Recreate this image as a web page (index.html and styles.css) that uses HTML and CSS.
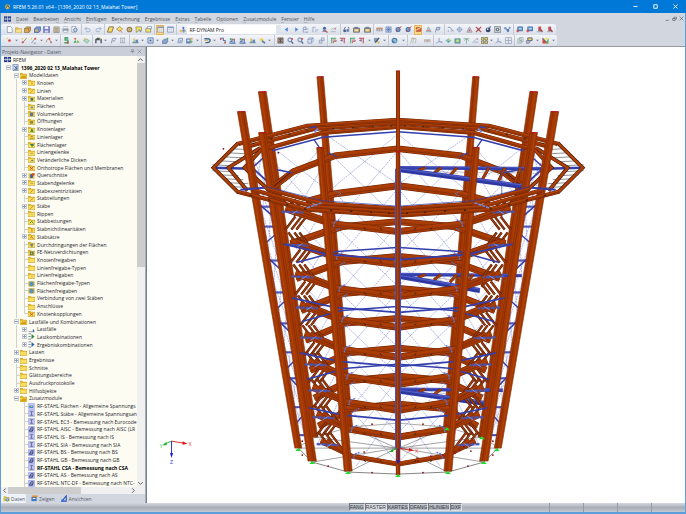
FILE: index.html
```html
<!DOCTYPE html>
<html lang="de">
<head>
<meta charset="utf-8">
<title>RFEM 5.26.01 x64 - [1396_2020 02 13_Malahat Tower]</title>
<link rel="stylesheet" href="styles.css">
</head>
<body>
<div class="window">
  <header class="titlebar">
    <svg class="app-icon" viewBox="0 0 16 16"><circle cx="8" cy="8" r="6.5" fill="#3f87a8"/><path d="M2 9l5-6 4 3 3-2-2 8-6 2z" fill="#e2bd58"/><path d="M4 12l4-7 4 6" fill="none" stroke="#30526b" stroke-width="2"/></svg>
    <h1 class="title">RFEM 5.26.01 x64 - [1396_2020 02 13_Malahat Tower]</h1>
    <button class="win-btn" aria-label="Minimieren"><svg viewBox="0 0 10 10"><path d="M1 5h8"/></svg></button>
    <button class="win-btn" aria-label="Maximieren"><svg viewBox="0 0 10 10"><path d="M1.500 1.500h7v7h-7z"/></svg></button>
    <button class="win-btn" aria-label="Schließen"><svg viewBox="0 0 10 10"><path d="M1 1l8 8M9 1l-8 8"/></svg></button>
  </header>

  <nav class="menubar">
    <svg class="menu-icon" viewBox="0 0 16 12"><path fill="#263b86" d="M0 0h16v12H0z"/><path d="M8 0v12M0 6h16M4 3v6M12 3v6" stroke="#dfe5f5" stroke-width="1.500"/></svg>
    <a href="#"><u>D</u>atei</a><a href="#">Bearbeite<u>n</u></a><a href="#"><u>A</u>nsicht</a><a href="#"><u>E</u>infügen</a><a href="#">Be<u>r</u>echnung</a><a href="#">Er<u>g</u>ebnisse</a><a href="#">E<u>x</u>tras</a><a href="#"><u>T</u>abelle</a><a href="#">O<u>p</u>tionen</a><a href="#"><u>Z</u>usatzmodule</a><a href="#"><u>F</u>enster</a><a href="#"><u>H</u>ilfe</a>
    <span class="mdi">
      <button aria-label="Fenster minimieren"><svg viewBox="0 0 8 8"><path d="M1 7h5"/></svg></button>
      <button aria-label="Fenster wiederherstellen"><svg viewBox="0 0 8 8"><path d="M1 4h4v3H1zM3 4V2h4v3H5"/></svg></button>
      <button aria-label="Fenster schließen"><svg viewBox="0 0 8 8"><path d="M1 1l6 6M7 1L1 7"/></svg></button>
    </span>
  </nav>

  <div class="toolbar toolbar-file" id="toolbar-file"></div>
  <div class="toolbar toolbar-edit" id="toolbar-edit"></div>

  <main class="workspace">
    <aside class="navigator">
      <div class="panel-head">
        <h2>Projekt-Navigator - Daten</h2>
        <button aria-label="Anheften"><svg viewBox="0 0 8 8"><path d="M2.500 1h3v3h-3zM1 4h6M4 4v3"/></svg></button>
        <button aria-label="Navigator schließen"><svg viewBox="0 0 8 8"><path d="M1 1l6 6M7 1L1 7"/></svg></button>
      </div>
      <div class="tree-wrap">
        <ul class="tree" id="tree"></ul>
        <div class="vscroll"><svg viewBox="0 0 8 8"><path d="M1.500 5.500L4 3l2.500 2.500"/></svg><div class="track"><i></i></div><svg viewBox="0 0 8 8"><path d="M1.500 2.500L4 5l2.500-2.500"/></svg></div>
      </div>
      <div class="hscroll"><svg viewBox="0 0 8 8"><path d="M5.500 1.500L3 4l2.500 2.500"/></svg><div class="track"><i></i></div><svg viewBox="0 0 8 8"><path d="M2.500 1.500L5 4 2.500 6.500"/></svg></div>
      <div class="tabs">
        <button class="tab active"><svg viewBox="0 0 16 16"><path d="M1 3h6l1 2h7v9H1z" fill="#ecc63a"/><path d="M5 6h8v5H5z" fill="#fff" stroke="#566"/><circle cx="10" cy="11" r="3" fill="#8cc8ef" stroke="#27588e"/></svg>Daten</button>
        <button class="tab"><svg viewBox="0 0 16 16"><path d="M1 4h12v10H1z" fill="#3c79c2"/><path d="M3 1h12v4H3z" fill="#e68a2e"/><path d="M4 7h6v2H4z" fill="#fff"/></svg>Zeigen</button>
        <button class="tab"><svg viewBox="0 0 16 16"><path d="M2 14L12 2v12z" fill="none" stroke="#2455bd" stroke-width="2.500"/><circle cx="4" cy="12" r="3" fill="#3c79d2"/></svg>Ansichten</button>
      </div>
    </aside>
    <section class="viewport"><svg id="model" viewBox="147 46 538 457" role="img" aria-label="3D-Modell Malahat Tower"></svg></section>
  </main>

  <footer class="statusbar">
    <div class="snaps"><button>FANG</button><button class="on">RASTER</button><button>KARTES</button><button>OFANG</button><button>HLINIEN</button><button>DXF</button></div>
    <div class="cells"><i></i><i></i><i></i><i></i></div>
  </footer>
</div>
<script src="script.js"></script>
</body>
</html>
```
FILE: styles.css
```css
* { box-sizing: border-box; }
html, body { height: 100%; margin: 0; }
body { font-family: "Open Sans", "Noto Sans", sans-serif; font-size: 5px; line-height: 8px; color: #2c2c30; overflow: hidden; }
button { font: inherit; color: inherit; background: none; border: 0; padding: 0; margin: 0; display: flex; align-items: center; justify-content: center; }
svg { display: block; }
h1, h2 { margin: 0; font: inherit; }
.window { display: flex; flex-direction: column; height: 100%; background: #d2d6df; border: solid #5b9edb; border-width: 0 1px 2px; }

.titlebar { display: flex; align-items: center; height: 13px; flex: none; margin: 0 -1px; padding: 0 1px 0 4px; background: #0078d7; color: #fff; }
.app-icon { width: 7px; height: 7px; margin-right: 2px; }
.title { flex: 1; }
.win-btn { width: 19px; height: 13px; margin-left: 1px; }
.win-btn svg { width: 5px; height: 5px; fill: none; stroke: #e4f1fb; stroke-width: 2; }

.menubar { display: flex; align-items: center; flex: none; height: 11px; gap: 5px; padding-left: 3px; color: #50545c; }
.menubar a { color: inherit; text-decoration: none; }
.menu-icon { width: 7px; height: 6px; }
.menubar u { text-decoration-thickness: 1px; text-decoration-color: #b0b3bb; }
.mdi { display: flex; gap: 2px; margin-left: auto; padding-right: 1px; }
.mdi svg, .panel-head svg { width: 5px; height: 5px; fill: none; stroke: #555963; stroke-width: 1; }

.toolbar { display: grid; flex: none; height: 11px; width: max-content; background: linear-gradient(#f3f5f9, #d9dee8); border-radius: 2px; padding-left: 3px; }
.toolbar-file { grid-template-columns: 78px 23px 50px 22px 164px 33px 71px 69px 42px; }
.toolbar-edit { grid-template-columns: 57px 32px 37px 72px 73px 53px 61px 19px 26px 81px 42px; }
.group { display: flex; align-items: center; justify-content: space-between; padding: 0 2px 0 1px; border-right: 1px solid #c3c8d3; }
.group:last-child { border: 0; }
.tool { width: 8px; height: 10px; flex: none; }
.tool svg { width: 7px; height: 7px; opacity: 0.85; }
.tool.active { background: #ffd88c; outline: 1px solid #e8b45c; outline-offset: -1px; }
.drop { width: 4px; flex: none; }
.drop svg { width: 3px; height: 3px; }
.module { appearance: none; width: 94px; height: 9px; border: 0; border-right: 5px solid #dfe3ea; border-radius: 0; background: #fff; font: inherit; padding: 0 2px; color: #222; }

.workspace { display: flex; flex: 1; min-height: 0; border-top: 1px solid #969ba6; }
.navigator { display: flex; flex-direction: column; width: 145px; flex: none; border-right: 1px solid #a9aebb; }
.panel-head { display: flex; align-items: center; gap: 2px; height: 9px; flex: none; padding: 0 3px 0 1px; background: #c9ced9; color: #545b68; }
.panel-head h2 { flex: 1; }
.panel-head svg { stroke: #80858f; }
.tree-wrap { display: flex; flex: 1; min-height: 0; background: #fdfcf3; }
.tree { flex: 1; min-width: 0; overflow: hidden; list-style: none; margin: 0; padding: 0 0 0 3px; display: grid; grid-auto-rows: minmax(0, 1fr); color: #26262a; }
.tree li { display: flex; align-items: center; white-space: nowrap; min-width: 0; }
.tree li.bold { font-weight: 700; color: #000; }
.tree svg { width: 7px; height: 7px; flex: none; margin-right: 2px; }
.guide { width: 8px; align-self: stretch; flex: none; background: linear-gradient(#d0d0cc, #d0d0cc) 4px 0 / 1px 100% no-repeat; }
.guide.blank { background: none; }
.guide.leaf { background: linear-gradient(#d0d0cc, #d0d0cc) 4px 0 / 1px 100% no-repeat, linear-gradient(#d0d0cc, #d0d0cc) 4px 50% / 4px 1px no-repeat; }
.guide.last { background: linear-gradient(#d0d0cc, #d0d0cc) 4px 0 / 1px 50% no-repeat, linear-gradient(#d0d0cc, #d0d0cc) 4px 50% / 4px 1px no-repeat; }
.toggle { width: 5px; height: 5px; border: 1px solid #c6cad3; background: #f6f8fb; margin: 0 1px 0 2px; flex: none; position: relative; }
.toggle::before { content: ""; width: 3px; height: 1px; background: #8c9aba; flex: none; }
.toggle.closed::after { content: ""; position: absolute; width: 1px; height: 3px; left: 1px; top: 0; background: #8c9aba; }

.vscroll, .hscroll { display: flex; flex: none; background: #f0f0f0; }
.vscroll { flex-direction: column; width: 8px; }
.hscroll { height: 7px; padding-right: 8px; align-items: stretch; }
.vscroll svg, .hscroll svg { width: 7px; height: 7px; fill: none; stroke: #505050; stroke-width: 1; flex: none; }
.track { flex: 1; display: flex; }
.vscroll .track { flex-direction: column; }
.track i { background: #cdcdcd; }
.vscroll .track i { height: 49%; }
.hscroll .track i { width: 60%; }

.tabs { display: flex; gap: 3px; height: 9px; flex: none; color: #555b68; }
.tab { padding: 0 1px 0 2px; gap: 1px; }
.tab.active { background: #edf1f8; }
.tab svg { width: 7px; height: 7px; }

.viewport { flex: 1; min-width: 0; background: #fff; border-left: 1px solid #777d8b; }
.viewport svg { width: 100%; height: 100%; }

.statusbar { display: flex; flex: none; height: 9px; background: linear-gradient(#d5d8de, #a9afb8 50%, #c4c8cf); font-family: "Liberation Sans", Arial, sans-serif; color: #3c3f45; line-height: 7px; }
.snaps { display: flex; margin-left: 348px; }
.snaps button { border: 1px solid; border-color: #777c84 #dfe2e6 #dfe2e6 #777c84; height: 8px; }
.snaps .on { background: #dadde1; }
.cells { display: flex; justify-content: flex-end; margin-left: auto; }
.cells i { width: 34px; border-left: 1px solid #949aa4; }
```
FILE: script.js
```js
/* ---------- icons ---------- */
const p = (d, fill, stroke, w) => `<path d="${d}" fill="${fill || 'none'}" stroke="${stroke || 'none'}" stroke-width="${w || 2}"/>`;
const c = (x, y, r, fill) => `<circle cx="${x}" cy="${y}" r="${r}" fill="${fill}"/>`;
const folderShape = p('M0 3h6l2 2h8v10H0z', '#e9bc2a', '#b08a1c', 1) + p('M1 7h14v7H1z', '#fbdf5e');
const ICONS = {
  neu: p('M3 1h7l4 4v10H3z', '#fff', '#67758e', 1.5),
  open: p('M1 4h6l2 2h6v9H1z', '#e8b92f', '#9d7b1c', 1) + p('M4 8h12l-3 7H1z', '#fbe07a'),
  blockO: p('M1 6l5-4h9v8l-4 5H1z', '#d9a13a', '#76501b', 1.5) + p('M1 6h10v9M11 6l4-4', '', '#76501b', 1.5),
  blockB: p('M1 6l5-4h9v8l-4 5H1z', '#5f86c4', '#243f78', 1.5) + p('M3 8h6v5H3z', '#dda73d'),
  save: p('M1 1h14v14H1z', '#5f64b8', '#3d4289', 1) + p('M4 1h8v6H4z', '#eef') + p('M4 10h8v5H4z', '#cfd4ea'),
  arch: p('M2 2h12v13H2z', '#d8c9a0', '#6d6a63', 1.5) + p('M4 6h8M4 9h8M4 12h8', '', '#786f5c', 1.5),
  print: p('M4 1h8v5H4z', '#fff', '#70798a', 1) + p('M1 6h14v6H1z', '#8793a8') + p('M4 10h8v5H4z', '#fff', '#70798a', 1),
  view: p('M2 1h9v13H2z', '#fff', '#70798a', 1.5) + `<circle cx="10" cy="9" r="4" fill="#bcdaf3" stroke="#48669c" stroke-width="2"/>`,
  undo: p('M3 6h7q4 0 4 4t-4 3H5M6 2L2 6l4 4', '', '#8fa3c9', 2),
  redo: p('M13 6H6q-4 0-4 4t4 3h5M10 2l4 4-4 4', '', '#8fa3c9', 2),
  para: p('M5 2h10l-4 12H1z', '#f5e14c', '#7e4e22', 2),
  ring: p('M1 7l8-6 6 6-7 5z', '#f3dd46', '#94602d', 1.5) + p('M9 9l5 6', '', '#d35321', 2),
  gear: `<circle cx="8" cy="8" r="5" fill="#eed94f" stroke="#8b6b2c" stroke-width="3"/>` + c(8, 8, 2, '#698bbd'),
  note: p('M2 2h13v9H7l-4 4z', '#f2e04b', '#777035', 1.5) + p('M9 8l5 6', '', '#4b72b1', 2),
  sheet: p('M2 5h11v9H2z', '#f6e35d', '#746a37', 1.5) + p('M6 1h9v5H6z', '#fff', '#5876ac', 1.5),
  table: p('M1 2h14v12H1z', '#fff', '#617399', 1.5) + p('M1 2h14v3H1z', '#7293c5') + p('M5 5v9M10 5v9M1 9h14', '', '#a0adc2', 1),
  calc: p('M2 9h5v5H2z', '#e2bc38') + p('M8 2h4v6H8z', '#3b65ad') + p('M7 11h8M11 8v7', '', '#4a6187', 2),
  left: p('M11 3L4 8l7 5z', '#3873d0'), right: p('M5 3l7 5-7 5z', '#3873d0'),
  res: p('M3 15V3l6-1v5h5M3 8h7M6 14h8', '', '#7891bf', 2),
  bars: p('M2 14V3h6M7 13h3M7 9h7', '', '#8d9db9', 2),
  user: c(8, 5, 3.5, '#274d92') + p('M2 13l6-6 6 6z', '#496eb0') + p('M9 10l6 5', '', '#d04c30', 3),
  val: p('M2 13h12M3 9l3-4 3 3 5-5', '', '#a1a9b8', 2) + c(12, 6, 2, '#c77'),
  glass: p('M2 8l4-6M14 6l-2-4', '', '#46546d', 2) + c(4, 11, 3.5, '#35517d') + c(11, 10, 3.5, '#5a7aa5'),
  tv: p('M1 5h14v9H1z', '#dda93b', '#46546d', 2) + p('M3 2h9v4H3z', '#566a8e') + p('M4 8h7v4H4z', '#eee7c2'),
  grip: p('M1 4h14v8H1z', '#8b8f98') + p('M1 4h14v3H1z', '#cb8156') + p('M5 7v5M10 7v5', '', '#eee', 1.5),
  net: p('M2 2h12v12H2z', '#b8cbea', '#5875ab', 1.5) + p('M2 8h12M8 2v12M4 4l8 8M12 4l-8 8', '', '#4665a5', 1.5),
  lens: `<circle cx="7" cy="8" r="4.500" fill="#69a8db" stroke="#28569a" stroke-width="2.500"/>` + p('M10 4l5-3M3 13l9-10', '', '#bf3e30', 2),
  redbox: p('M3 4h10v8H3z', '#e5543d', '#8f2e1b', 2) + p('M1 10l13-7', '', '#fff1b4', 2),
  cone: p('M3 13L8 2l6 11z', '#bcc3cf', '#848c9b', 1.5) + p('M4 10h8', '', '#d46e5b', 2),
  flag: p('M3 15L6 3h8l-2 6H5', '#b7c3d9', '#506994', 1.5),
  link: p('M2 3h5l6 8h2M3 10v3', '', '#6483ac', 2) + c(10, 12, 2.5, '#bcc8d8'),
  compass: p('M8 1v14M1 8h14', '', '#8ba4c6', 1.5) + `<circle cx="8" cy="8" r="4.500" fill="none" stroke="#778ebb" stroke-width="2"/>`,
  tri: p('M2 14L8 2l6 12z', '#d5dae2', '#7f6877', 1.5) + p('M5 12l3-6 3 6z', '#b65761'),
  cross: p('M2 2l12 12M14 2L2 14', '', '#c42f30', 3) + p('M6 6h4v4H6z', '#56463f'),
  bomb: c(7, 9, 5.5, '#1c2b57') + p('M9 3l5-1', '', '#4472b9', 3) + c(6, 7, 2, '#e6edf7'),
  frame: p('M1 1h14v14H1z', '#c0c5cc', '#818894', 2) + c(8, 8, 4, '#545b69') + c(8, 8, 1.5, '#eee'),
  atoms: p('M3 5l6 5 4-6M9 10v4', '', '#38558a', 2) + c(3, 5, 3, '#668fc8') + c(9, 10, 3.2, '#3e6cb2') + c(13, 4, 2.5, '#6f98cc'),
  cubeR: p('M4 2h11v9H4z', '#2e7ec2', '#1e4b8b', 1.5) + p('M6 4h7v4H6z', '#a9d8f2') + p('M1 11h6M4 8v6', '', '#d02f2d', 3),
  pin: p('M6 2h5v9H6z', '#d03531', '#7c1d20', 1) + p('M2 13h12', '', '#7f95b7', 2) + p('M9 7l6 6', '', '#a11e21', 3),
  node: c(8, 8, 3, '#d9261c') + p('M2 2h3M2 2v3', '', '#e5d24b', 2),
  line: p('M4 13L13 2', '', '#87683f', 2) + c(4, 12, 2.5, '#d23b28') + c(3, 4, 2, '#e9cb39'),
  line2: p('M3 14L12 3M8 14h6', '', '#7c84a5', 2) + c(12, 4, 2.5, '#d2402d') + c(3, 4, 2, '#e9cb39'),
  arc: p('M3 12q1-9 7-7l4 8', '', '#a7835d', 2) + c(10, 4, 2.5, '#d2402d') + c(14, 12, 2, '#c2463b'),
  snake: p('M12 2H5v5h6v6H3', '', '#2a9950', 3.5) + c(11, 13, 2.5, '#cf3d2c'),
  sup: p('M1 13l4-6 4 6z', '#2ca449') + p('M8 13l3-6 4 6z', '#7aac33') + c(5, 4, 2.5, '#d3552d'),
  plane: p('M1 8l6-4 8 5-6 5z', '#a9d4b0', '#6aa684', 1.5) + c(4, 5, 2.5, '#ddc04d'),
  gate: p('M2 14V6h12v8M2 6l4-3h4l4 3', '', '#2f3742', 3) + c(12, 4, 2, '#d7b942'),
  pf: p('M3 14L6 3h5q3 2-1 6H5M12 3h3', '', '#7384a6', 2),
  dim: p('M2 3h12M4 1v13M12 1v13M2 13h12M8 6v6', '', '#8793a8', 1.5),
  load: p('M1 13h14', '', '#48586f', 2) + p('M3 3h4v6H3z', '#e4be35') + p('M8 6h6v7H8z', '#4e7bb8') + c(5, 11, 2, '#59a95e'),
  box: p('M2 2h12v12H2z', '#cdd9ee', '#4b6ca6', 2) + p('M6 6h4v4H6z', '#2e476f'),
  solid: p('M1 9l4-4h8v6l-3 4H1z', '#7798c6', '#3e5c8e', 1.5) + p('M11 2l3 3', '', '#40a050', 3),
  hex: p('M4 3h9l-2 10H2z', '#d9e1ed', '#7389ae', 2) + c(8, 9, 3, '#95acd0'),
  sect: p('M1 4h9v10H1z', '#4e79b8', '#29518a', 1) + p('M3 6h5v4H3z', '#dcebf7') + p('M10 2h5v4h-5z', '#dc9c32') + c(12, 11, 3, '#69a65c'),
  steps: p('M1 4h6q7 0 7 4t-7 5H3', '', '#2e5170', 3) + p('M1 8h8', '', '#d2a23d', 2),
  hook: p('M2 3h8v5h4v6', '', '#4463a4', 2.5) + c(4, 5, 2, '#d4452c') + c(14, 13, 2, '#d4452c'),
  stack: p('M1 14h14M2 10h5V5h5v9', '', '#3e66a3', 2.5) + c(4, 5, 2.5, '#50a257') + c(12, 6, 2, '#d8503a'),
  bulb: c(6, 6, 4, '#efce3b') + p('M7 9l7 5', '', '#4a6c98', 4),
  render: p('M2 2h12v12H2z', '#9a8774', '#55443a', 1.5) + p('M2 14L14 2M2 2l12 12M8 2v12', '', '#38302c', 1.5),
  zoom: `<circle cx="6.500" cy="6.500" r="4.500" fill="#d4e5f5" stroke="#415c98" stroke-width="2"/>` + p('M10 10l4 5', '', '#444f73', 3) + p('M9 4h5M12 2v5', '', '#c83939', 2),
  cube: p('M2 5l4-3h8v8l-4 4H2zM2 5h8v9M10 5l4-3', '#dde5f2', '#5f77a3', 1.5),
  pan: p('M3 7h6v7H3zM8 2h6v6H8z', '#ccd6e8', '#7187b0', 1.5),
  ax: p('M2 3h12M4 3v11', '', '#2f9c55', 2.5) + p('M7 7h7v3H8v4', '', '#b74140', 2),
  ax2: p('M2 3h12M12 3v11M7 3v7', '', '#b63c48', 2.500) + p('M3 8h5', '', '#3e62a6', 2),
  brush: p('M2 2h9v9H2z', '#6d90b4') + p('M14 2l-9 11', '', '#353942', 3) + p('M10 10h5v5h-5z', '#d5b83e'),
  globe: c(8, 8, 6.5, '#276390') + p('M3 6q5-5 9 1t-3 6', '#7ab5d4'),
  arch2: p('M2 14l2-10h4L6 14M9 4h5l-2 10', '', '#a8b8aa', 2) + p('M3 3h10', '', '#d87878', 1.5),
  tape: p('M1 6h13v5H1z', '#d6d3ce', '#a09d98', 1.5) + p('M4 8h7', '', '#c78a75', 2),
  work: p('M7 2v8l-6 4M7 10l8 3', '', '#748db9', 2) + c(12, 11, 2, '#93a9cb'),
  diamond: p('M1 8l7-5 7 5-7 5z', '#53bbaa') + p('M5 8l4-4 4 4z', '#e2ca4f') + p('M4 10l4 3 3-3z', '#4679c3'),
  prism: p('M2 4h12v10H2z', '#54a987', '#3e7785', 1.5) + p('M5 6h6v5H5z', '#d6db70'),
  tee: p('M1 4h13M8 4v11M3 8l5-4 5 5', '', '#70a68a', 2),
  beam: p('M1 13l10-9 4 3M6 12h8', '', '#8d9fc3', 2) + c(12, 4, 1.5, '#c77'),
  quad: p('M1 1h6v6H1zM9 1h6v6H9zM1 9h6v6H1zM9 9h6v6H9z', '#e0cc55', '#51513c', 1.5),
  grid: p('M1 1h14v14H1zM1 8h14M8 1v14', '#e2e6ee', '#8591a8', 1.5),
  copy: p('M2 4h8v10H2zM6 1h8v10H6z', '#dfe8df', '#8795a3', 1.5) + p('M7 8h4', '', '#6fab6f', 2),
  layer: p('M4 2h10v6H4z', '#ddcb4e', '#474b55', 2) + p('M1 8h10l-4 6H1z', '#a9b9d5', '#4f5970', 1.500),
  spectrum: p('M1 2v13h14z', '#d52e25') + p('M15 2v12H8z', '#46a640') + p('M5 2l4 6 6-6z', '#f5e633') + p('M1 2l8 9', '', '#224f9e', 2)
};
const svg = (inner) => `<svg viewBox="0 0 16 16" aria-hidden="true">${inner}</svg>`;

/* ---------- toolbars: groups split by |, "-" is a drop-down arrow, "*" marks an active tool ---------- */
const TOOLBARS = {
  'toolbar-file': 'neu open blockO blockB save arch print view|undo redo|para ring gear note sheet|*table table|calc @ left right res bars user val|glass tv tv|grip net lens lens *redbox cone flag|link compass tri cross bomb frame atoms|cubeR cubeR pin pin',
  'toolbar-edit': 'node - line line2 - arc -|snake sup plane|gate - pf dim|load - box - solid - hex sect -|steps - hook stack stack load bulb -|render zoom zoom cube pan|ax ax2 ax ax2 - brush -|globe -|arch2 tape|work diamond prism tee beam quad - work grid|copy layer - spectrum -'
};
for (const [id, spec] of Object.entries(TOOLBARS)) {
  document.getElementById(id).innerHTML = spec.split('|').map(g => '<div class="group">' + g.split(' ').map(n => {
    if (n === '-') return '<button class="drop" aria-label="Mehr"><svg viewBox="0 0 8 8"><path d="M0 2h8L4 6z" fill="#777d8b"/></svg></button>';
    if (n === '@') return '<select class="module" aria-label="Zusatzmodul"><option>RF-DYNAM Pro</option></select>';
    const on = n[0] === '*';
    const name = n.replace('*', '');
    return `<button class="tool${on ? ' active' : ''}" aria-label="${name}">${svg(ICONS[name])}</button>`;
  }).join('') + '</div>').join('');
}

/* ---------- navigator tree: depth, toggle (+ closed, - open, . none), icon, label ---------- */
const B = '#2f62ad', G = '#2b8b3e', R = '#cf4a22';
const folder = mark => folderShape + (mark || '');
const TI = {
  app: p('M0 2h16v12H0z', '#263b86') + p('M8 2v12M0 8h16M4 5v6M12 5v6', '', '#dfe5f5', 1.5),
  doc: p('M2 1h12v14H2z', '#d9e4f3', '#637ca9', 1.5) + p('M5 4l6 8M11 4v8H5', '', '#355693', 2),
  f: folder(), o: folder(p('M4 8h12l-3 7H1z', '#d7a112')),
  dot: folder(c(9, 10, 2, '#e08a30')), ln: folder(p('M5 13l7-6', '', '#c98532', 2)), mat: folder(p('M6 7h3v6H6z', B) + p('M9 7h3v6H9z', G)),
  area: folder(p('M6 8h6v4H6z', '#5d92c9')), vol: folder(p('M4 6h8v8H4z', '#5f7894')), hole: folder(p('M4 7h8v6H4z', '#8b8f4a')),
  sup: folder(p('M5 13l4-8 4 8z', G)), sup2: folder(p('M4 12h9M6 8h5', '', '#998228', 2)), sup3: folder(p('M4 7h9v4l-4 2z', '#328555')),
  hinge: folder(p('M5 10h7', '', '#ab9a61', 2)), thick: folder(p('M4 12l8-4v4z', '#4b7b9b')), sec: p('M1 3h14v12H1z', '#eec043') + p('M5 5h6v9H5z', B) + p('M9 3h6v5H9z', R),
  bed: folder(p('M4 12l4-4 5 4', '', G, 2)), ex: folder(p('M9 6v5M9 12v2', '', R, 2)), set: folder(p('M5 12l3-4 4 5', '', R, 2)),
  pen: folder(p('M4 9h8M9 6v8', '', B, 2)), fe: folder(p('M4 6h9v8H4z', '#5b7360') + c(8, 10, 2, '#cdbb44')), gray: folder(c(9, 10, 2, '#c2c39c')),
  blue: p('M1 3h14v12H1z', '#cba932') + c(8, 9, 5, '#5695bd'), x: folder(p('M4 7l8 6M12 7l-8 6', '', R, 2)),
  lc: p('M1 13h14', '', '#8b92a0', 2) + p('M11 8h3v5h-3z', B),
  comboG: p('M1 2h6M1 8h5M1 14h6', '', '#7c8492', 2) + p('M8 2l7 6-7 6z', G), comboB: p('M1 2h6M1 8h5M1 14h6', '', '#7c8492', 2) + p('M8 2l7 6-7 6z', B),
  m1: p('M1 1h14v14H1z', '#c2c8f8', '#8790dc', 1) + p('M3 6h9v5H3z', '#3972b8') + p('M6 6h4v3H6z', '#b8db52'),
  m2: p('M1 1h14v14H1z', '#c2c8f8', '#8790dc', 1) + p('M4 4h8M8 4v8M4 12h8', '', '#626990', 2),
  m3: p('M1 1h14v14H1z', '#b7bef5', '#7a84dc', 1) + p('M3 12l4-8h5l-2 8zM5 9h7', '', '#38436f', 2)
};
const TREE = `0.app RFEM
0-doc *1396_2020 02 13_Malahat Tower
1-o Modelldaten
2+dot Knoten
2+ln Linien
2+mat Materialien
2.area Flächen
2.vol Volumenkörper
2.hole Öffnungen
2+sup Knotenlager
2.sup2 Linienlager
2.sup3 Flächenlager
2.hinge Liniengelenke
2.thick Veränderliche Dicken
2.x Orthotrope Flächen und Membranen
2+sec Querschnitte
2+hinge Stabendgelenke
2+ln Stabexzentrizitäten
2.ln Stabteilungen
2+ln Stäbe
2.gray Rippen
2.bed Stabbettungen
2.ex Stabnichtlinearitäten
2+set Stabsätze
2.pen Durchdringungen der Flächen
2.fe FE-Netzverdichtungen
2.f Knotenfreigaben
2.f Linienfreigabe-Typen
2.gray Linienfreigaben
2.blue Flächenfreigabe-Typen
2.blue Flächenfreigaben
2.f Verbindung von zwei Stäben
2.f Anschlüsse
2.x Knotenkopplungen
1-o Lastfälle und Kombinationen
2+lc Lastfälle
2+comboG Lastkombinationen
2+comboB Ergebniskombinationen
1+f Lasten
1+f Ergebnisse
1.f Schnitte
1.f Glättungsbereiche
1.f Ausdruckprotokolle
1+f Hilfsobjekte
1-o Zusatzmodule
2.m1 RF-STAHL Flächen - Allgemeine Spannungs
2.m2 RF-STAHL Stäbe - Allgemeine Spannungsan
2.m2 RF-STAHL EC3 - Bemessung nach Eurocode
2.m3 RF-STAHL AISC - Bemessung nach AISC (LR
2.m2 RF-STAHL IS - Bemessung nach IS
2.m2 RF-STAHL SIA - Bemessung nach SIA
2.m3 RF-STAHL BS - Bemessung nach BS
2.m3 RF-STAHL GB - Bemessung nach GB
2.m2 *RF-STAHL CSA - Bemessung nach CSA
2.m3 RF-STAHL AS - Bemessung nach AS
2.m3 RF-STAHL NTC-DF - Bemessung nach NTC-`.split('\n').map(r => r.match(/^(\d)([-+.])(\w+) (\*?)(.*)$/));
document.getElementById('tree').innerHTML = TREE.map(([, d, t, icon, bold, label], i) => {
  const depth = +d;
  let lead = '';
  if (i > 0) {
    for (let k = 0; k < depth; k++) {
      const more = k === 0 ? false : TREE.slice(i + 1).some(r => +r[1] === k);
      lead += `<span class="guide${more ? '' : ' blank'}"></span>`;
    }
    const last = !TREE[i + 1] ? false : +TREE[i + 1][1] < depth;
    lead += t === '.' ? `<span class="guide ${last ? 'last' : 'leaf'}"></span>` : `<button class="toggle ${t === '+' ? 'closed' : 'open'}" aria-label="${label}"></button>`;
  }
  return `<li class="${bold ? 'bold' : ''}">${lead}${svg(TI[icon])}<span>${label}</span></li>`;
}).join('');

/* ---------- tower model ---------- */
const RUST = '#a63b05', DARK = '#6e2406', BLUE = '#343fae', CX = 398;
const poly = (pts, col, w, extra) => `<polyline points="${pts.map(q => q.join(',')).join(' ')}" fill="none" stroke="${col}" stroke-width="${w}" ${extra || ''}/>`;
const flip = pts => pts.map(([x, y]) => [2 * CX - x, y]);
const both = (pts, col, w, e) => poly(pts, col, w, e) + poly(flip(pts), col, w, e);
const shift = (pts, dy) => pts.map(([x, y]) => [x, y + dy]);
/* a rolled section: dark outline, body, flange lines */
const beam = (pts, w) => both(pts, DARK, w) + both(pts, RUST, w - 1) + both(shift(pts, w / 6), '#7f2b07', 0.7) + both(shift(pts, -w / 5), '#b8450d', 0.5);
const post = (x1, y1, x2, y2, w1, w2) => {
  const q = [[x1 - w1 / 2, y1], [x1 + w1 / 2, y1], [x2 + w2 / 2, y2], [x2 - w2 / 2, y2]];
  const shape = pts => `<polygon points="${pts.map(a => a.join(',')).join(' ')}" fill="#a33803" stroke="#842c04" stroke-width="0.6"/>`;
  return shape(q) + shape(flip(q)) + both([[x1 + w1 / 5, y1], [x2 + w2 / 5, y2]], '#862d05', 0.8) + both([[x1 - w1 / 5, y1], [x2 - w2 / 5, y2]], '#b3440a', 1)
    + both([[x1 - w1 / 2, y1], [x1 + w1 / 2, y1 - 0.4]], '#b3121b', 1);
};
const thin = pts => both(pts, '#6a72d0', 0.5, 'stroke-dasharray="2 0.7"');
const at = (x1, y1, x2, y2, y) => x1 + (x2 - x1) * (y - y1) / (y2 - y1);
const bBack = y => at(320, 76, 349, 427, y), cBack = y => at(262, 91, 314, 437, y);
const bFront = y => at(320, 146, 348, 471, y), cFront = y => at(262, 131, 312, 461, y), dPost = y => at(241, 111, 298, 448, y);
let out = '';

/* cable bracing */
const backs = [184, 221, 256, 288, 318, 348, 376, 404];
[[134, 183], [151, 218], [189, 253], [225, 285], [260, 316], [292, 346], [322, 374], [352, 404], [380, 432], [408, 462]].forEach(([a, b]) => {
  out += thin([[397, a], [bBack(b) + 4, b + 4]]) + thin([[397, b], [bBack(a) + 4, a + 2]]);
  if (b < 440) {
    out += thin([[bBack(a), a + 8], [cBack(b) + 4, b + 12]]) + thin([[bBack(b), b + 8], [cBack(a) + 6, a + 14]]);
    out += thin([[dPost(b) + 3, b], [cFront(a), a + 12]]) + thin([[dPost(a + 20) + 3, a + 20], [cFront(b), b + 12]]);
  }
});

/* ground lines */
out += both([[298, 448], [312, 462], [348, 472], [398, 474]], '#333', 0.6) + both([[298, 447], [315, 437], [349, 427], [398, 423]], '#555', 0.5);
[[298, 448], [312, 462], [348, 472], [349, 427], [315, 437]].forEach(q => { out += both([q, [397, 448]], '#444', 0.5); });

/* outer blue struts */
[206, 226, 260, 292, 323, 352, 378, 407, 435].forEach((y, i) => {
  out += both([[dPost(y), y], [cFront(y) + 9, y]], BLUE, 2) + both([[dPost(y), y], [cFront(y) + 9, y - 0.5]], '#6d79da', 0.5);
  if (i < 8) out += i % 2 ? both([[cFront(y), y + 7], [dPost(y) + 3, y + 18]], BLUE, 1.4) : both([[dPost(y), y - 4], [cFront(y) + 2, y + 12]], BLUE, 1.6);
});
out += both([[252, 167], [277, 190]], BLUE, 1.8) + both([[252, 167], [272, 149]], BLUE, 1.5) + both([[314, 139], [320, 148]], BLUE, 1.3);

/* back posts */
out += post(262, 91, 314, 437, 8, 7) + post(320, 76, 349, 427, 6.5, 7);

/* crown ring, back half */
out += both([[398, 131], [323, 136.500], [272, 150]], BLUE, 1.6);
[[[398, 126], [322, 132], [262, 149]], [[398, 122], [314, 128], [250, 145]], [[398, 119], [307, 125], [238, 143]]].forEach(b => { out += beam(b, 4.4); });
out += both([[314, 131], [318, 128]], '#6f87df', 2) + both([[310, 127], [316, 126]], BLUE, 1.5);

/* inner rings behind the front posts */
out += beam([[398, 148], [335, 155], [293, 171], [272, 187]], 6.5) + both([[290, 172], [268, 190]], '#33170d', 1);
out += beam([[398, 185], [335, 193], [306, 201]], 7) + both([[292, 172], [277, 169]], BLUE, 1.6);
out += both([[335, 190], [341, 193], [336, 196]], '#6879d5', 1, 'stroke-dasharray="1.5 1"') + both([[328, 152], [337, 156]], BLUE, 1.3);

/* slanted girders on the access side */
const girder = (y, end, x2, y2, n) => {
  let s = poly([[400, y], [end, y + 1]], BLUE, 3.4) + poly([[400, y - 1], [end, y]], '#6570cf', 0.5);
  for (let i = 0; i < n; i++) {
    const x = 418 + i * 16;
    s += poly([[x, y + 3 + i * 2.4], [x + 7, y]], DARK, 3) + poly([[x, y + 3 + i * 2.4], [x + 7, y]], RUST, 2) + poly([[x, y + 3], [x + 24, y + 6]], '#686868', 0.4);
  }
  return s + poly([[400, y + 2], [x2, y2]], BLUE, 5) + poly([[400, y + 1], [x2, y2 - 1.500]], '#6d78d4', 0.6) + poly([[400, y + 3], [x2, y2 + 1.500]], '#252c83', 0.6);
};
out += girder(167, 551, 524, 186, 7) + girder(274, 522, 480, 290, 5) + girder(389, 503, 484, 403, 4);
out += poly([[524, 189], [462, 207], [400, 211]], BLUE, 2) + poly([[502, 170], [502, 195]], BLUE, 0.7);

/* floor rings */
backs.slice(1).forEach(y => {
  out += beam([[398, y], [342, y + 5], [bBack(y) - 6, y + 10], [cFront(y) + 15, y + 22]], 7);
  out += both([[bBack(y) + 12, y + 4], [bBack(y) + 4, y + 9]], '#6174d5', 1.2, 'stroke-dasharray="1.5 1"');
});
const fronts = [231, 264, 296, 327, 357, 384, 410, 437, 464];
fronts.forEach((y, i) => {
  const b = bFront(y), f = cFront(y);
  /* chevrons between the side posts */
  const t = y - 26;
  [0, 6, 11].forEach(o => {
    out += both([[f + 6 + o, t - 6], [f + 18 + o, t + 10]], '#42180a', 2.4) + both([[f + 6 + o, t - 6], [f + 18 + o, t + 10]], RUST, 1.4);
    if (i < 8) out += both([[f + 18 + o, t + 11], [f + 8 + o, t + 24]], '#42180a', 2.4) + both([[f + 18 + o, t + 11], [f + 8 + o, t + 24]], RUST, 1.4);
  });
  out += beam([[398, y], [b + 4, y - 8], [f + 8, y - 23]], i > 7 ? 5 : 7);
  out += both([[b - 3, y - 13], [f + 14, y - 24]], DARK, 3.4) + both([[b - 3, y - 13], [f + 14, y - 24]], RUST, 2.4);
  out += both([[f + 4, y - 20], [f + 26, y - 19]], '#4557bc', 2.2, 'stroke-dasharray="4 1"') + both([[f + 14, y - 17], [f + 20, y - 21]], '#7a92e8', 1);
  out += both([[b + 6, y - 5], [b + 7, y - 10], [b + 13, y - 12]], '#6174d5', 1.4, 'stroke-dasharray="2 0.8"');
  [364, 380].forEach(x => { out += both([[x, y - 4], [x + 1.500, y - 2]], '#221', 1); });
});

/* blue stabilising rings */
[[243, 259, 247], [297, 312, 306], [352, 366, 364], [407, 420, 420]].forEach(([a, b, e]) => {
  out += both([[cFront(a) + 2, a], [bFront(b), b - 5], [397, b]], BLUE, 1.700);
  if (e !== b) out += both([[397, e], [bFront(e) + 8, e + 4], [bFront(e) - 32, e + 15]], BLUE, 1.6);
});

/* crown ring, tips */
for (let i = 0; i < 5; i++) {
  const y = 148 + i * 4, x = 232 - i * 5;
  out += both([[x, y], [x + 19, y + 1]], '#222', 0.5) + both([[x, 334 - y], [x + 21, 334 - y + 1]], '#222', 0.5);
}
out += both([[212, 167], [252, 168]], BLUE, 2.4);
[[[260, 147], [228, 167], [247, 190]], [[262, 148], [244, 167], [268, 189]], [[238, 142], [213, 167], [238, 192]]].forEach(t => { out += both(t, '#35170c', 3.8) + both(t, RUST, 2.700) + both(t, '#c34f18', 0.5); });

/* front posts */
out += post(241, 111, 298, 448, 8, 7);
out += post(262, 132, 312, 461, 7.5, 8.5);
out += post(320, 147, 348, 471, 7, 8);

/* crown ring, front half */
[[[266, 188], [322, 203], [398, 208]], [[252, 189], [314, 206], [398, 211.500]], [[237, 191], [307, 209], [398, 215]]].forEach(b => { out += beam(b, 4.2); });
out += both([[240, 189], [264, 187]], BLUE, 2) + both([[307, 207], [322, 202]], '#6f87df', 1.6, 'stroke-dasharray="3 1"') + both([[266, 186], [322, 200], [398, 205.500]], BLUE, 0.7);
[250, 268, 286, 304, 330, 350, 370, 388].forEach(x => { const y = x < 308 ? 191 + (x - 237) / 4 : 208 + (x - 307) / 20; out += both([[x, y], [x + 2, y + 1]], '#221', 1.1) + both([[x + 2, 335 - y * 0.99], [x + 4, 335 - y * 0.99]], '#221', 0.9); });

/* centre post */
out += poly([[398, 70], [398, 150]], DARK, 4) + poly([[398, 70], [398, 150]], '#ac3c06', 2.8) + poly([[398, 150], [398, 475]], '#8c2d05', 4.4) + poly([[397.500, 150], [397.500, 475]], '#b14108', 1.6);
out += poly([[395.600, 168], [395.600, 448]], '#4651b8', 1.2) + poly([[400.400, 168], [400.400, 448]], '#4651b8', 1.2) + poly([[396, 70], [400, 70]], '#b3121b', 1) + poly([[396, 151], [400, 151]], '#c3121b', 1.5);

/* supports, nodes */
const foot = (x, y) => `<polygon points="${x},${y} ${x + 3},${y + 3} ${x - 3},${y + 3}" fill="#1fe02e"/>`;
[[298, 448], [312, 461], [348, 471], [398, 474], [448, 471], [484, 461], [497, 448], [447, 427], [482, 436]].forEach(([x, y]) => { out += foot(x, y); });
[[223, 148], [278, 152], [302, 455], [328, 466], [372, 472.5], [364, 452], [372, 424], [423, 472.5], [468, 466], [493, 455], [423, 424], [431, 456], [443, 455], [417, 458], [455, 453], [460, 450], [464, 447], [471, 451], [418, 461], [493, 441], [302, 441]].forEach(([x, y]) => { out += `<circle cx="${x}" cy="${y}" r="0.9" fill="#8f0d18"/>`; });

/* coordinate axes */
const axis = (x, y, n) => poly([[x, y], [x + 12 , y + 2]], '#e01515', 0.9) + `<polygon points="${x + 11},${y} ${x + 16},${y + 2.5} ${x + 11},${y + 3.500}" fill="#e01515"/>`
  + poly([[x, y], [x - 7, y + 3]], '#18a828', 0.9) + `<polygon points="${x - 5},${y + 0.700} ${x - 9},${y + 4} ${x - 5},${y + 4}" fill="#18a828"/>`
  + poly([[x, y], [x, y + 13]], '#1717e0', 0.9) + `<polygon points="${x - 1.500},${y + 12} ${x + 1.500},${y + 12} ${x},${y + 17}" fill="#1717e0"/>`
  + `<text x="${x + 17}" y="${y + 5}" fill="#f04040">X</text>` + (n ? `<text x="${x - 12}" y="${y + 7}" fill="#25c535">Y</text><text x="${x - 1.500}" y="${y + 23}" fill="#3838f0">Z</text>` : '');
out += `<g font-family="Liberation Sans, Arial, sans-serif" font-size="5">${axis(171, 441, true)}${axis(398, 448, false)}</g>`;

document.getElementById('model').innerHTML = out;
```
